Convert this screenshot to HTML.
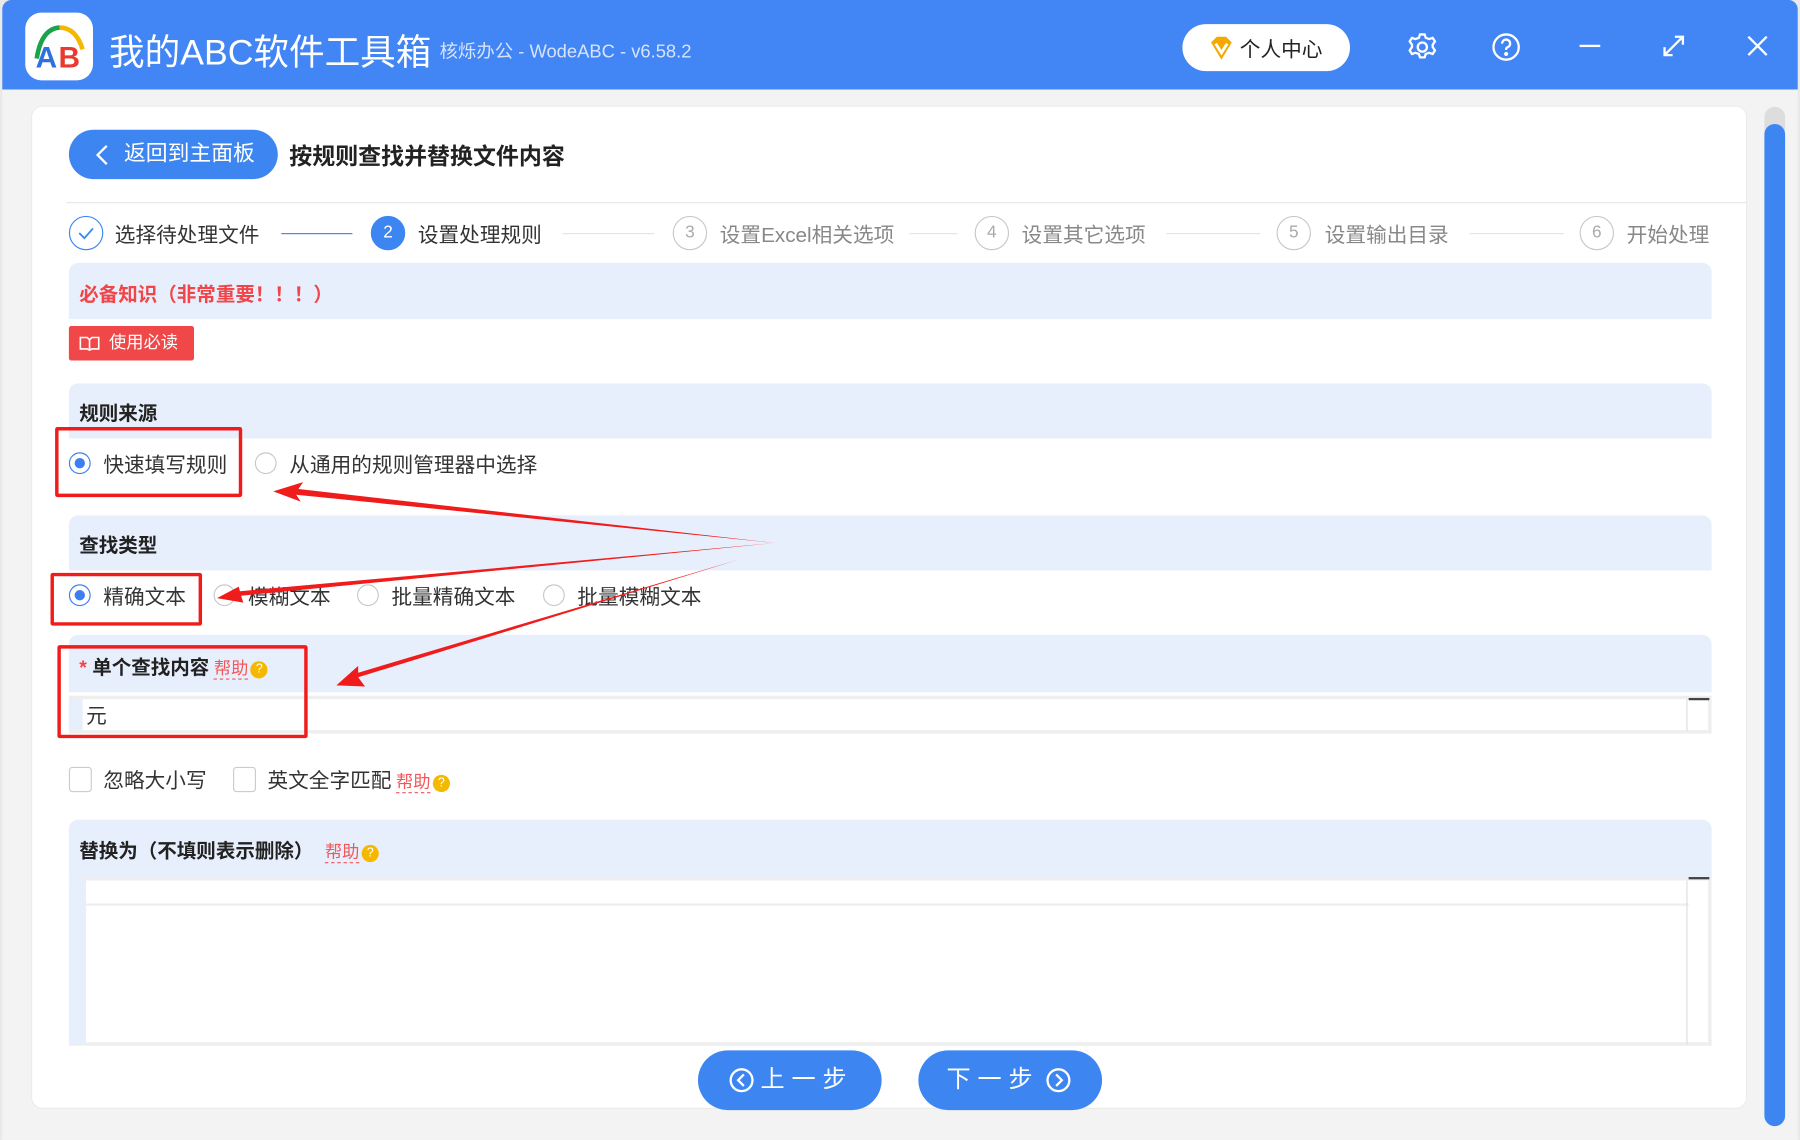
<!DOCTYPE html>
<html><head><meta charset="utf-8"><style>
*{margin:0;padding:0;box-sizing:border-box}
html,body{width:1800px;height:1140px;overflow:hidden;background:#e9e9e9}
#s{position:absolute;left:0;top:0;width:1568px;height:993px;transform:scale(1.14796);transform-origin:0 0;font-family:"Liberation Sans","Noto Sans CJK SC",sans-serif;color:#222}
.a{position:absolute}
.band{position:absolute;left:60px;width:1431px;background:#e8effc;border-radius:8px 8px 0 0}
.bt{position:absolute;left:9px;font-weight:bold;font-size:17px}
.rad{position:absolute;width:19px;height:19px;border:1px solid #c8c8c8;border-radius:50%;background:#fff}
.rad.on{border-color:#3b7ff0}
.rad.on:after{content:"";position:absolute;left:4px;top:4px;width:9px;height:9px;border-radius:50%;background:#3b7ff0}
.lab{position:absolute;font-size:18px;color:#333}
.step{position:absolute;top:188px;width:30px;height:30px;border:1px solid #c8c8c8;border-radius:50%;text-align:center;line-height:28px;font-size:15px;color:#aaa}
.sl{position:absolute;top:203px;height:1px;background:#e4e4e4}
.st{position:absolute;top:191px;font-size:18px;color:#888}
.help{color:#f0585a;font-size:15px;border-bottom:1px dashed #f0585a;font-weight:normal;margin-left:4px}
.q{display:inline-block;width:15px;height:15px;border-radius:50%;background:#f5b800;color:#fff;font-size:11px;text-align:center;line-height:15px;vertical-align:1px;margin-left:2px;font-weight:normal}
.chk{position:absolute;width:20px;height:22px;border:1px solid #ccc;border-radius:3px;background:#fff}
.red{position:absolute;border:3px solid #f01c1c;border-radius:2px}
.nb{position:absolute;top:915px;width:160px;height:52px;border-radius:26px;background:#3d86f2;color:#fff;font-size:21px;text-align:center;line-height:52px;letter-spacing:6px}
</style></head><body><div id="s">
<div class="a" style="left:2px;top:0;width:1564px;height:78px;background:#4285f4;border-radius:8px 8px 0 0"></div>
<div class="a" style="left:2px;top:78px;width:1564px;height:915px;background:#f3f3f3"></div>
<div class="a" style="left:22px;top:11px;width:59px;height:59px;background:#fff;border-radius:14px"></div>
<svg class="a" style="left:22px;top:11px" width="59" height="59"><path d="M10 40 Q14 14 30 13" stroke="#1aa34a" stroke-width="4" fill="none"/><path d="M30 13 Q44 13 50 32" stroke="#f5b800" stroke-width="4" fill="none"/><text x="9" y="48" font-size="26" font-weight="bold" fill="#2f6fe0" font-family="Liberation Sans">A</text><text x="29" y="48" font-size="26" font-weight="bold" fill="#e83a2e" font-family="Liberation Sans">B</text></svg>
<div class="a" style="left:95px;top:20px;font-size:31px;color:#fff">我的ABC软件工具箱</div>
<div class="a" style="left:383px;top:31px;font-size:16px;color:#d6e4fd">核烁办公 - WodeABC - v6.58.2</div>
<div class="a" style="left:1030px;top:21px;width:146px;height:41px;background:#fff;border-radius:21px"></div>
<svg class="a" style="left:1052px;top:30px" width="24" height="24"><path d="M3 7 L8 2 H16 L21 7 L12 22 Z" fill="#f5a800"/><path d="M7 8 L12 16 L17 8" stroke="#fff" stroke-width="2.5" fill="none"/></svg>
<div class="a" style="left:1080px;top:29px;font-size:18px;color:#222">个人中心</div>
<svg class="a" style="left:1226px;top:28px" width="26" height="26" fill="none" stroke="#fff" stroke-width="2"><circle cx="13" cy="13" r="4"/><path d="M11 2h4l1 3 3 1 3-1 2 3-2 3v2l2 3-2 3-3-1-3 1-1 3h-4l-1-3-3-1-3 1-2-3 2-3v-2l-2-3 2-3 3 1 3-1z"/></svg>
<svg class="a" style="left:1299px;top:28px" width="26" height="26" fill="none" stroke="#fff" stroke-width="2"><circle cx="13" cy="13" r="11"/><path d="M9.5 10a3.5 3.5 0 1 1 4.5 3.3c-1 .4-1 1-1 2.2"/><circle cx="13" cy="19" r=".8" fill="#fff"/></svg>
<div class="a" style="left:1376px;top:39px;width:18px;height:2px;background:#fff"></div>
<svg class="a" style="left:1447px;top:29px" width="22" height="22" stroke="#fff" stroke-width="2" fill="none"><path d="M3 19 L19 3 M12 3h7v7 M3 12v7h7" /></svg>
<svg class="a" style="left:1521px;top:30px" width="20" height="20" stroke="#fff" stroke-width="2"><path d="M2 2 L18 18 M18 2 L2 18"/></svg>
<div class="a" style="left:27px;top:92px;width:1495px;height:874px;background:#fff;border-radius:10px;border:1px solid #ececec"></div>
<div class="a" style="left:1537px;top:93px;width:18px;height:888px;background:#ddd;border-radius:9px"></div>
<div class="a" style="left:1537px;top:108px;width:18px;height:873px;background:#3d86f2;border-radius:9px"></div>
<div class="a" style="left:60px;top:113px;width:182px;height:43px;background:#3d86f2;border-radius:22px;color:#fff;font-size:19px;line-height:43px;padding-left:48px">返回到主面板</div>
<svg class="a" style="left:82px;top:125px" width="14" height="20" stroke="#fff" stroke-width="2" fill="none"><path d="M11 2 L3 10 L11 18"/></svg>
<div class="a" style="left:252px;top:120px;font-size:20px;font-weight:bold;color:#222">按规则查找并替换文件内容</div>
<div class="a" style="left:58px;top:176px;width:1464px;height:1px;background:#e8e8e8"></div>
<div class="step" style="left:60px;border-color:#3d86f2"><svg width="28" height="28" stroke="#3d86f2" stroke-width="1.6" fill="none"><path d="M8 14 L12.5 18.5 L20 10"/></svg></div>
<div class="st" style="left:100px;color:#333">选择待处理文件</div>
<div class="sl" style="left:245px;width:62px;background:#3d86f2"></div>
<div class="step" style="left:323px;background:#3d86f2;border-color:#3d86f2;color:#fff">2</div>
<div class="st" style="left:364px;color:#333">设置处理规则</div>
<div class="sl" style="left:490px;width:80px"></div>
<div class="step" style="left:586px">3</div><div class="st" style="left:627px">设置Excel相关选项</div>
<div class="sl" style="left:792px;width:42px"></div>
<div class="step" style="left:849px">4</div><div class="st" style="left:890px">设置其它选项</div>
<div class="sl" style="left:1016px;width:82px"></div>
<div class="step" style="left:1112px">5</div><div class="st" style="left:1154px">设置输出目录</div>
<div class="sl" style="left:1280px;width:82px"></div>
<div class="step" style="left:1376px">6</div><div class="st" style="left:1417px">开始处理</div>
<div class="band" style="top:229px;height:49px"><div class="bt" style="top:13px;color:#f0464a">必备知识（非常重要！！！）</div></div>
<div class="a" style="left:60px;top:284px;width:109px;height:30px;background:#f04848;border-radius:2px;color:#fff;font-size:15px;line-height:30px;padding-left:35px">使用必读</div>
<svg class="a" style="left:69px;top:292px" width="18" height="14" stroke="#fff" stroke-width="1.4" fill="none"><path d="M1 2h6l2 2 2-2h6v10h-6l-2 1-2-1H1z M9 4v9"/></svg>
<div class="band" style="top:334px;height:48px"><div class="bt" style="top:12px">规则来源</div></div>
<div class="rad on" style="left:60px;top:394px"></div><div class="lab" style="left:90px;top:391px">快速填写规则</div>
<div class="rad" style="left:222px;top:394px"></div><div class="lab" style="left:252px;top:391px">从通用的规则管理器中选择</div>
<div class="band" style="top:449px;height:48px"><div class="bt" style="top:12px">查找类型</div></div>
<div class="rad on" style="left:60px;top:509px"></div><div class="lab" style="left:90px;top:506px">精确文本</div>
<div class="rad" style="left:186px;top:509px"></div><div class="lab" style="left:216px;top:506px">模糊文本</div>
<div class="rad" style="left:311px;top:509px"></div><div class="lab" style="left:341px;top:506px">批量精确文本</div>
<div class="rad" style="left:473px;top:509px"></div><div class="lab" style="left:503px;top:506px">批量模糊文本</div>
<div class="band" style="top:553px;height:50px"><div class="bt" style="top:14px"><span style="color:#f0464a">* </span>单个查找内容<span class="help">帮助</span><span class="q">?</span></div></div>
<div class="a" style="left:60px;top:606px;width:1431px;height:33px;border:3px solid #eee;background:#fff"></div>
<div class="a" style="left:60px;top:609px;width:12px;height:27px;background:#e8effc"></div>
<div class="a" style="left:1471px;top:608px;width:18px;height:2px;background:#444"></div>
<div class="a" style="left:1469px;top:609px;width:1px;height:28px;background:#ddd"></div>
<div class="lab" style="left:75px;top:610px">元</div>
<div class="chk" style="left:60px;top:668px"></div><div class="lab" style="left:90px;top:666px">忽略大小写</div>
<div class="chk" style="left:203px;top:668px"></div><div class="lab" style="left:233px;top:666px">英文全字匹配<span class="help">帮助</span><span class="q">?</span></div>
<div class="band" style="top:714px;height:50px"><div class="bt" style="top:13px">替换为（不填则表示删除）<span class="help" style="margin-left:10px">帮助</span><span class="q">?</span></div></div>
<div class="a" style="left:60px;top:764px;width:1431px;height:147px;background:#fff;border:3px solid #eee;border-left:15px solid #e8effc"></div>
<div class="a" style="left:75px;top:767px;width:1396px;height:22px;border-bottom:2px solid #eee"></div>
<div class="a" style="left:1471px;top:764px;width:18px;height:2px;background:#444"></div>
<div class="a" style="left:1469px;top:767px;width:1px;height:143px;background:#ddd"></div>
<div class="nb" style="left:608px;padding-left:30px">上一步</div>
<svg class="a" style="left:634px;top:929px" width="24" height="24" stroke="#fff" stroke-width="2" fill="none"><circle cx="12" cy="12" r="9.5"/><path d="M14 7 L9 12 L14 17"/></svg>
<div class="nb" style="left:800px;padding-right:30px">下一步</div>
<svg class="a" style="left:910px;top:929px" width="24" height="24" stroke="#fff" stroke-width="2" fill="none"><circle cx="12" cy="12" r="9.5"/><path d="M10 7 L15 12 L10 17"/></svg>
<div class="red" style="left:48px;top:372px;width:163px;height:61px"></div>
<div class="red" style="left:44px;top:499px;width:132px;height:46px"></div>
<div class="red" style="left:50px;top:562px;width:218px;height:81px"></div>
<svg class="a" style="left:0;top:0" width="1568" height="993"><g fill="#f01c1c">
<path d="M675 473 L258 431 L262 437 L238 428 L264 420 L260 426 Z"/>
<path d="M675 473 L210 519 L212 525 L189 521 L208 511 L209 515 Z"/>
<path d="M645 487 L312 590 L318 598 L293 597 L312 580 L312 586 Z"/>
</g></svg>
</div></body></html>
